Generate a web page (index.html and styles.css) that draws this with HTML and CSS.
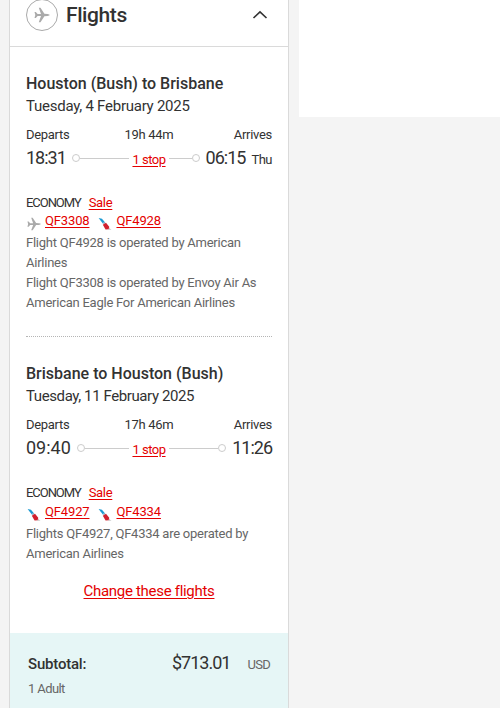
FILE: index.html
```html
<!DOCTYPE html>
<html lang="en">
<head>
<meta charset="UTF-8" />
<meta name="viewport" content="width=device-width, initial-scale=1" />
<title>Flights</title>
<link rel="stylesheet" href="styles.css">
</head>
<body>

<!-- Shared icons -->
<svg class="sprite" width="0" height="0">
  <symbol id="plane" viewBox="0 0 16 16">
    <path d="M0.5 5 L1.8 5 L3.6 7 L7 7 L4.8 0.8 L6.5 0.8 L10.4 6.8 L13.6 7 Q15.5 7.3 15.8 8 Q15.5 8.7 13.6 9 L10.4 9.2 L6.5 15.2 L4.8 15.2 L7 9 L3.6 9 L1.8 11 L0.5 11 L1.3 8 Z"/>
  </symbol>
  <symbol id="american" viewBox="0 0 14 14">
    <path fill="#1b9ad2" d="M0.6 1 L4 1.7 L7.3 5.8 L5.2 7 Z"/>
    <path fill="#b9c3cb" d="M5.6 5 L7.4 6 L7 8.2 L5 6.6 Z"/>
    <path fill="#d0202e" d="M4.8 7.8 L8 5.8 L11 9.5 L11.4 12.2 L7.6 12.6 Z"/>
    <path fill="#c8c8c8" d="M11 11 L13.6 12.8 L10 12.8 Z"/>
  </symbol>
</svg>

<div class="page">
  <aside class="summary">
    <div class="summary-header">
      <span class="header-icon"><svg><use href="#plane"/></svg></span>
      <h2>Flights</h2>
      <svg class="chevron" viewBox="0 0 16 10"><path d="M1.5 8 L8 1.8 L14.5 8"/></svg>
    </div>

    <section class="segment">
      <h3>Houston (Bush) to Brisbane</h3>
      <p class="date">Tuesday, 4 February 2025</p>
      <div class="labels"><span>Departs</span><span>19h 44m</span><span>Arrives</span></div>
      <div class="times">
        <div class="point">
          <span class="time">18:31</span>
          <span class="track track-start"></span>
        </div>
        <a class="stops" href="#">1 stop</a>
        <div class="point">
          <span class="track track-end"></span>
          <span class="time">06:15</span><span class="day">Thu</span>
        </div>
      </div>
      <div class="cabin"><span class="cabin-name">ECONOMY</span><a href="#">Sale</a></div>
      <div class="numbers">
        <svg class="carrier carrier-plane"><use href="#plane"/></svg><a href="#">QF3308</a>
        <svg class="carrier"><use href="#american"/></svg><a href="#">QF4928</a>
      </div>
      <p class="operated">Flight QF4928 is operated by American<br>Airlines<br>Flight QF3308 is operated by Envoy Air As<br>American Eagle For American Airlines</p>
    </section>

    <section class="segment segment-return">
      <h3>Brisbane to Houston (Bush)</h3>
      <p class="date">Tuesday, 11 February 2025</p>
      <div class="labels"><span>Departs</span><span>17h 46m</span><span>Arrives</span></div>
      <div class="times">
        <div class="point">
          <span class="time time-wide">09:40</span>
          <span class="track track-start"></span>
        </div>
        <a class="stops" href="#">1 stop</a>
        <div class="point">
          <span class="track track-end"></span>
          <span class="time">11:26</span>
        </div>
      </div>
      <div class="cabin"><span class="cabin-name">ECONOMY</span><a href="#">Sale</a></div>
      <div class="numbers">
        <svg class="carrier"><use href="#american"/></svg><a href="#">QF4927</a>
        <svg class="carrier"><use href="#american"/></svg><a href="#">QF4334</a>
      </div>
      <p class="operated">Flights QF4927, QF4334 are operated by<br>American Airlines</p>
    </section>

    <a class="change" href="#">Change these flights</a>

    <div class="subtotal">
      <div class="subtotal-row">
        <strong>Subtotal:</strong>
        <span class="amount">$713.01</span>
        <span class="currency">USD</span>
      </div>
      <p class="travellers">1 Adult</p>
    </div>
  </aside>
  <main class="content"></main>
</div>

</body>
</html>
```
FILE: styles.css
```css
* {
  box-sizing: border-box;
}
body {
  margin: 0;
  height: 708px;
  overflow: hidden;
  background: #f4f4f4;
  color: #323232;
  font-family: Roboto, "Liberation Sans", sans-serif;
  font-size: 13px;
}
h2, h3, p {
  margin: 0;
}
a {
  color: #e40000;
  text-decoration: underline;
  text-underline-offset: 2px;
}
.sprite {
  display: block;
}
.page {
  display: flex;
  align-items: flex-start;
  gap: 10px;
  padding-left: 9px;
}
.summary {
  flex: 0 0 280px;
  height: 708px;
  background: #fff;
  border: solid #dadada;
  border-width: 0 1px;
}
.content {
  flex: 1;
  height: 117px;
  background: #fff;
}
.summary-header {
  display: flex;
  align-items: center;
  height: 64px;
  margin-top: -17px;
  padding: 0 20px 0 16px;
  border-bottom: 1px solid #dadada;
}
.header-icon {
  display: flex;
  align-items: center;
  justify-content: center;
  width: 32px;
  height: 32px;
  border: 1px solid #aaa;
  border-radius: 50%;
}
.header-icon svg {
  width: 16px;
  height: 16px;
  fill: #aaa;
}
.summary-header h2 {
  margin-left: 8px;
  font-size: 21px;
  font-weight: 500;
  letter-spacing: -0.4px;
}
.chevron {
  width: 16px;
  height: 10px;
  margin-left: auto;
  fill: none;
  stroke: #323232;
  stroke-width: 1.6;
}
.segment {
  margin: 0 16px;
  padding-top: 26px;
}
.segment h3 {
  font-size: 16px;
  font-weight: 500;
  line-height: 22px;
  letter-spacing: 0;
}
.date {
  font-size: 15px;
  line-height: 22px;
  letter-spacing: -0.25px;
}
.segment-return .date {
  letter-spacing: -0.4px;
}
.labels {
  display: grid;
  grid-template-columns: 1fr auto 1fr;
  margin-top: 8px;
  line-height: 20px;
  letter-spacing: -0.3px;
}
.labels span:last-child {
  text-align: right;
}
.times {
  display: grid;
  grid-template-columns: 1fr auto 1fr;
  height: 26px;
  line-height: 26px;
}
.point {
  display: flex;
  align-items: baseline;
}
.time {
  font-size: 18px;
  letter-spacing: -1px;
}
.time-wide {
  letter-spacing: 0;
}
.track {
  display: flex;
  flex: 1;
  align-items: center;
  align-self: center;
  padding-bottom: 2px;
}
.track::before {
  content: "";
  width: 6px;
  height: 6px;
  border: 1px solid #ccc;
  border-radius: 50%;
}
.track::after {
  content: "";
  flex: 1;
  height: 1px;
  background: #ccc;
}
.track-start {
  margin: 0 3px 0 6px;
}
.track-end {
  flex-direction: row-reverse;
  margin: 0 6px 0 3px;
}
.stops {
  padding-top: 2px;
  letter-spacing: -0.5px;
}
.day {
  margin-left: 6px;
  letter-spacing: -0.5px;
}
.cabin {
  display: flex;
  gap: 8px;
  margin-top: 22px;
  line-height: 20px;
  letter-spacing: -0.3px;
}
.cabin-name {
  letter-spacing: -1.05px;
}
.numbers {
  display: flex;
  align-items: center;
  height: 18px;
  line-height: 16px;
  padding-bottom: 2px;
  letter-spacing: -0.15px;
}
.segment-return .numbers {
  padding-bottom: 0;
}
.carrier {
  width: 14px;
  height: 14px;
  margin: 5px 4px 0 9px;
  fill: #aaa;
}
.carrier:first-child {
  margin-left: 1px;
}
.operated {
  margin-top: 2px;
  color: #666;
  line-height: 20px;
  letter-spacing: -0.24px;
}
.segment-return {
  margin-top: 23px;
  border-top: 1px dotted #b5b5b5;
}
.segment-return .operated {
  margin-top: 3px;
}
.change {
  display: block;
  width: max-content;
  margin: 16px auto 0;
  font-size: 15px;
  line-height: 22px;
  letter-spacing: -0.3px;
}
.subtotal {
  height: 75px;
  margin-top: 31px;
  padding: 18px 18px 0;
  background: #e6f6f6;
}
.subtotal-row {
  display: flex;
  align-items: baseline;
  height: 28px;
  line-height: 24px;
}
.subtotal strong {
  font-size: 15px;
  font-weight: 500;
  letter-spacing: -0.2px;
}
.amount {
  margin-left: auto;
  font-size: 18px;
  letter-spacing: -1px;
}
.currency {
  margin-left: 17px;
  color: #666;
  letter-spacing: -0.7px;
}
.travellers {
  color: #666;
  line-height: 20px;
  letter-spacing: -0.6px;
}
```
